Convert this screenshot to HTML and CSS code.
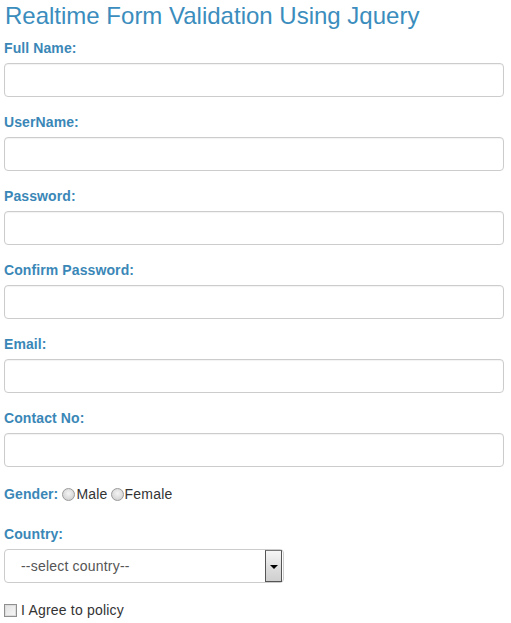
FILE: index.html
```
<!DOCTYPE html>
<html>
<head>
<meta charset="utf-8">
<link rel="stylesheet" href="styles.css">
</head>
<body>
<div class="page">
  <h1 class="title">Realtime Form Validation Using Jquery</h1>
  <form class="form">
    <div class="field">
      <label class="lbl">Full Name:</label>
      <input class="txt" type="text">
    </div>
    <div class="field">
      <label class="lbl">UserName:</label>
      <input class="txt" type="text">
    </div>
    <div class="field">
      <label class="lbl">Password:</label>
      <input class="txt" type="password">
    </div>
    <div class="field">
      <label class="lbl">Confirm Password:</label>
      <input class="txt" type="password">
    </div>
    <div class="field">
      <label class="lbl">Email:</label>
      <input class="txt" type="text">
    </div>
    <div class="field">
      <label class="lbl">Contact No:</label>
      <input class="txt" type="text">
    </div>
    <div class="gender">
      <span class="lbl-inline">Gender:</span>
      <span class="radio"></span><span class="opt">Male</span>
      <span class="radio"></span><span class="opt">Female</span>
    </div>
    <div class="field country">
      <label class="lbl">Country:</label>
      <div class="select">
        <span class="sel-text">--select country--</span>
        <span class="sel-btn"><span class="tri"></span></span>
      </div>
    </div>
    <div class="agree">
      <span class="check"></span><span class="opt">I Agree to policy</span>
    </div>
  </form>
</div>
</body>
</html>
```
FILE: styles.css
```
* { box-sizing: border-box; }
html, body { margin: 0; padding: 0; background: #fff; }
body { font-family: "Liberation Sans", Arial, sans-serif; color: #333; }
.page { padding: 3px 8px 0 4px; }
.title {
  margin: 0 0 0 1px;
  font-size: 24px;
  line-height: 26px;
  font-weight: normal;
  color: #3b8dbd;
}
.form { margin-top: 9px; }
.field + .field { margin-top: 15px; }
.lbl {
  display: block;
  font-size: 14px;
  font-weight: bold;
  line-height: 20px;
  color: #3a87b7;
  margin: 0 0 5px 0;
  letter-spacing: 0.1px;
}
.txt {
  display: block;
  width: 500px;
  height: 34px;
  margin: 0;
  border: 1px solid #ccc;
  border-radius: 4px;
  background: #fff;
  box-shadow: inset 0 1px 1px rgba(0,0,0,0.05);
}
.gender {
  margin-top: 17px;
  line-height: 20px;
  font-size: 14px;
  display: flex;
  align-items: center;
}
.lbl-inline {
  font-weight: bold;
  color: #3a87b7;
  margin-right: 4px;
  letter-spacing: 0.1px;
}
.radio {
  width: 13px;
  height: 13px;
  border-radius: 50%;
  border: 1px solid #9a9a9a;
  background: radial-gradient(circle at 50% 40%, #f4f4f4 0%, #d6d6d6 70%, #c4c4c4 100%);
  margin-right: 1px;
}
.opt { color: #333; font-size: 14px; letter-spacing: 0.2px; }
.opt + .radio { margin-left: 3px; }
.country { margin-top: 20px; }
.select {
  width: 280px;
  height: 34px;
  border: 1px solid #ccc;
  border-radius: 4px;
  display: flex;
  align-items: stretch;
  background: #fff;
}
.sel-text {
  flex: 1;
  padding-left: 16px;
  font-size: 14px;
  line-height: 32px;
  color: #555;
  letter-spacing: 0.2px;
}
.sel-btn {
  width: 17px;
  margin: 0 1px 0 0;
  border: 1px solid #555;
  border-top-color: #777;
  background: linear-gradient(#f6f6f6, #dcdcdc 60%, #cfcfcf);
  display: flex;
  align-items: center;
  justify-content: center;
}
.tri {
  width: 0;
  height: 0;
  border-left: 4px solid transparent;
  border-right: 4px solid transparent;
  border-top: 4px solid #000;
  margin-top: 2px;
}
.agree {
  margin-top: 17px;
  line-height: 20px;
  display: flex;
  align-items: center;
}
.check {
  width: 13px;
  height: 13px;
  border: 1px solid #8f8f8f;
  background: linear-gradient(135deg, #e2e2e2, #f7f7f7);
  margin-right: 4px;
  box-shadow: inset 0 0 0 1px #dcdcdc;
}
```
